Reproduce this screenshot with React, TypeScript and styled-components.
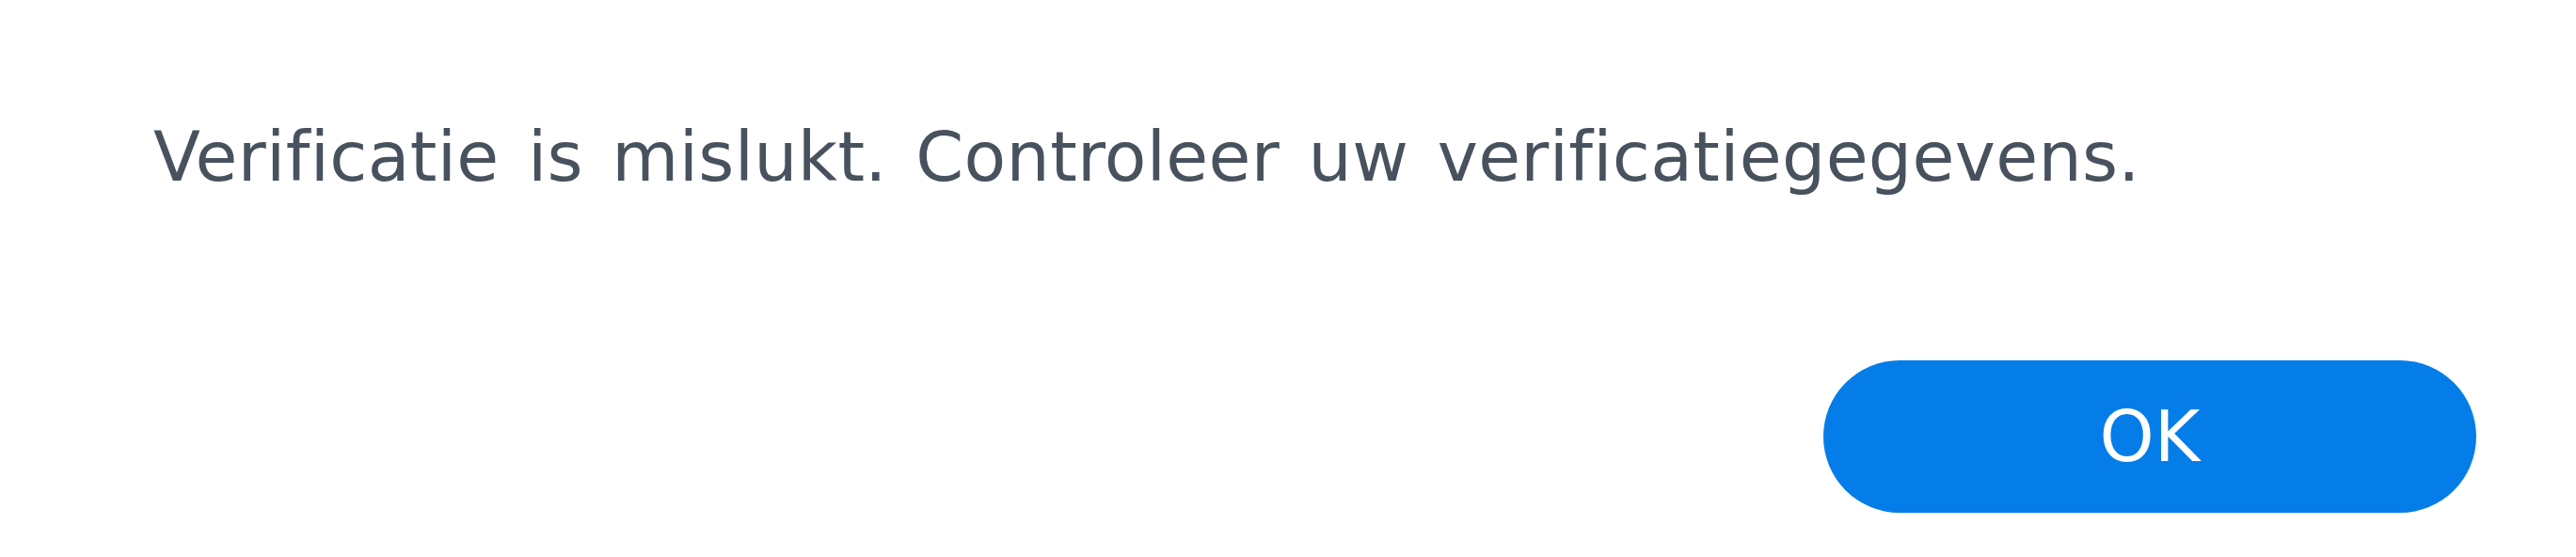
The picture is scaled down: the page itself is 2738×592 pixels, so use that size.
import React from 'react'
import styled, { createGlobalStyle } from 'styled-components'

const GlobalStyle = createGlobalStyle`
	html, body {
		margin: 0;
		padding: 0;
		background: #ffffff;
	}
`

const Dialog = styled.div`
	width: 2738px;
	height: 592px;
	box-sizing: border-box;
	padding: 122px 106px 0 163px;
	display: flex;
	flex-direction: column;
	background: #ffffff;
	font-family: 'DejaVu Sans', sans-serif;
	font-variant-ligatures: none;
`

const Message = styled.p`
	margin: 0;
	font-size: 73px;
	line-height: 89px;
	letter-spacing: 0.3px;
	word-spacing: 7px;
	color: #48525e;
	white-space: nowrap;
`

const Footer = styled.div`
	display: flex;
	justify-content: flex-end;
	margin-top: 172px;
`

const Button = styled.button`
	width: 694px;
	height: 162px;
	border: none;
	border-radius: 81px;
	background: #057de9;
	color: #ffffff;
	font-family: inherit;
	font-variant-ligatures: none;
	font-size: 74px;
	padding: 0;
	cursor: pointer;
`

const App = () => {
	return (
		<>
			<GlobalStyle />
			<Dialog>
				<Message>Verificatie is mislukt. Controleer uw verificatiegegevens.</Message>
				<Footer>
					<Button>OK</Button>
				</Footer>
			</Dialog>
		</>
	)
}

export default App
